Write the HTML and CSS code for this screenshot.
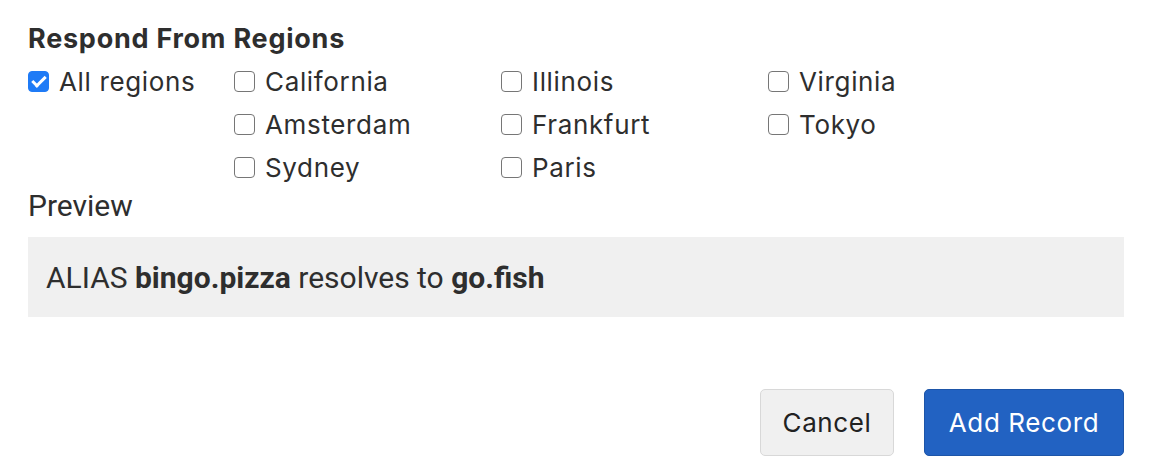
FILE: index.html
```html
<!DOCTYPE html>
<html>
<head>
<meta charset="utf-8">
<link rel="stylesheet" href="styles.css">
</head>
<body>
<div class="panel">
  <div class="section-title">Respond From Regions</div>
  <div class="regions">
    <label class="opt all"><input type="checkbox" checked><span>All regions</span></label>
    <div class="region-grid">
      <label class="opt"><input type="checkbox"><span>California</span></label>
      <label class="opt"><input type="checkbox"><span>Illinois</span></label>
      <label class="opt"><input type="checkbox"><span>Virginia</span></label>
      <label class="opt"><input type="checkbox"><span>Amsterdam</span></label>
      <label class="opt"><input type="checkbox"><span>Frankfurt</span></label>
      <label class="opt"><input type="checkbox"><span>Tokyo</span></label>
      <label class="opt"><input type="checkbox"><span>Sydney</span></label>
      <label class="opt"><input type="checkbox"><span>Paris</span></label>
    </div>
  </div>
  <div class="preview-label">Preview</div>
  <div class="preview-box">ALIAS <b>bingo.pizza</b> resolves to <b>go.fish</b></div>
  <div class="actions">
    <button class="btn btn-cancel">Cancel</button>
    <button class="btn btn-primary">Add Record</button>
  </div>
</div>
</body>
</html>
```
FILE: styles.css
```css
html, body {
  margin: 0;
  padding: 0;
  background: #fff;
}
body {
  font-family: Inter, "Liberation Sans", sans-serif;
  color: #333;
}
.panel {
  padding: 21px 40px 0 28px;
}
.section-title {
  font-size: 27px;
  font-weight: 700;
  letter-spacing: 0.75px;
  line-height: 36px;
  color: #2e2e2e;
}
.regions {
  display: flex;
  margin-top: 3px;
}
.opt {
  display: flex;
  align-items: center;
  height: 43px;
  font-size: 26px;
  letter-spacing: 0.65px;
  color: #2e2e2e;
}
.opt.all {
  width: 206px;
}
.region-grid {
  display: grid;
  grid-template-columns: 267px 267px 267px;
}
.opt input {
  appearance: none;
  -webkit-appearance: none;
  width: 21px;
  height: 21px;
  margin: 0 10px 0 0;
  border: 1.5px solid #767676;
  border-radius: 4px;
  background: #fff;
  flex: none;
  position: relative;
}
.opt input:checked {
  background: #1f7bf6;
  border-color: #1f7bf6;
}
.opt input:checked::after {
  content: "";
  position: absolute;
  left: 6px;
  top: 1px;
  width: 5px;
  height: 11px;
  border: solid #fff;
  border-width: 0 3px 3px 0;
  transform: rotate(45deg);
}
.preview-label {
  font-family: Roboto, "Liberation Sans", sans-serif;
  font-size: 30px;
  line-height: 36px;
  margin-top: -1px;
  color: #2e2e2e;
}
.preview-box {
  font-family: Roboto, "Liberation Sans", sans-serif;
  font-size: 30px;
  background: #f0f0f0;
  margin-top: 13px;
  height: 80px;
  box-sizing: border-box;
  padding: 0 18px;
  display: flex;
  align-items: center;
  white-space: pre;
  color: #2e2e2e;
}
.preview-box b {
  font-weight: 700;
}
.actions {
  display: flex;
  justify-content: flex-end;
  gap: 30px;
  margin-top: 72px;
}
.btn {
  font-family: Inter, "Liberation Sans", sans-serif;
  font-size: 26px;
  letter-spacing: 0.6px;
  height: 67px;
  border-radius: 5px;
  padding: 0;
  cursor: pointer;
}
.btn-cancel {
  background: #f0f0f0;
  border: 1px solid #d8d8d8;
  color: #222;
  width: 134px;
}
.btn-primary {
  background: #2262c2;
  border: 1px solid #1d55a8;
  color: #fff;
  width: 200px;
}
```
